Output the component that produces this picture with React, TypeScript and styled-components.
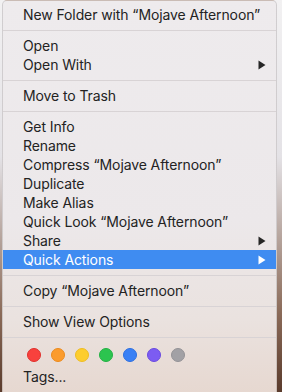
import React from "react";
import styled, { createGlobalStyle } from "styled-components";

const GlobalStyle = createGlobalStyle`
  html, body {
    margin: 0;
    padding: 0;
    width: 282px;
    height: 392px;
    overflow: hidden;
    background: linear-gradient(to bottom, #f2f1f2 0%, #e4e2e6 40%, #8a6a58 80%, #5a3b2c 100%);
  }
  body {
    font-family: Inter, "Noto Sans", "Liberation Sans", sans-serif;
  }
`;

type Entry =
  | { kind: "item"; label: string; submenu?: boolean; active?: boolean }
  | { kind: "sep" };

const entries: Entry[] = [
  { kind: "item", label: "New Folder with \u201cMojave Afternoon\u201d" },
  { kind: "sep" },
  { kind: "item", label: "Open" },
  { kind: "item", label: "Open With", submenu: true },
  { kind: "sep" },
  { kind: "item", label: "Move to Trash" },
  { kind: "sep" },
  { kind: "item", label: "Get Info" },
  { kind: "item", label: "Rename" },
  { kind: "item", label: "Compress \u201cMojave Afternoon\u201d" },
  { kind: "item", label: "Duplicate" },
  { kind: "item", label: "Make Alias" },
  { kind: "item", label: "Quick Look \u201cMojave Afternoon\u201d" },
  { kind: "item", label: "Share", submenu: true },
  { kind: "item", label: "Quick Actions", submenu: true, active: true },
  { kind: "sep" },
  { kind: "item", label: "Copy \u201cMojave Afternoon\u201d" },
  { kind: "sep" },
  { kind: "item", label: "Show View Options" },
  { kind: "sep" },
];

const tagColors = [
  { fill: "#f8413d", ring: "#e0302c" },
  { fill: "#fb9b2c", ring: "#ec8a1c" },
  { fill: "#fdcd2e", ring: "#eebd22" },
  { fill: "#2cc44f", ring: "#22b144" },
  { fill: "#3a80f5", ring: "#2d6fe0" },
  { fill: "#7c5cf2", ring: "#6a4ae0" },
  { fill: "#a2a1a5", ring: "#939296" },
];

export default function App() {
  return (
    <>
      <GlobalStyle />
      <Page>
        <Menu>
          {entries.map((e, i) =>
            e.kind === "sep" ? (
              <Separator key={i} />
            ) : (
              <Item key={i} $active={e.active}>
                <Label>{e.label}</Label>
                {e.submenu && (
                  <Arrow viewBox="0 0 8 10" $active={e.active}>
                    <path d="M0.5 0.5 L7.5 5 L0.5 9.5 Z" />
                  </Arrow>
                )}
              </Item>
            )
          )}
          <TagRow>
            {tagColors.map((c) => (
              <Dot key={c.fill} $fill={c.fill} $ring={c.ring} />
            ))}
          </TagRow>
          <Item>
            <Label>Tags...</Label>
          </Item>
        </Menu>
      </Page>
    </>
  );
}

const Page = styled.div`
  width: 282px;
  height: 392px;
  display: flex;
  padding-left: 2px;
  box-sizing: border-box;
`;

const Menu = styled.div`
  width: 275px;
  height: 400px;
  box-sizing: border-box;
  padding-top: 4px;
  display: flex;
  flex-direction: column;
  border: 1px solid rgba(0, 0, 0, 0.12);
  border-radius: 5px;
  background: linear-gradient(
    to bottom,
    #eeebed 0%,
    #ece8ea 55%,
    #eae2df 80%,
    #e6d7cf 100%
  );
`;

const Item = styled.div<{ $active?: boolean }>`
  height: 19px;
  display: flex;
  align-items: center;
  padding: 0 10px 0 20px;
  background: ${(p) => (p.$active ? "#3f8cf1" : "transparent")};
  color: ${(p) => (p.$active ? "#ffffff" : "#232323")};
`;

const Label = styled.span`
  flex: 1;
  font-size: 14px;
  letter-spacing: -0.1px;
  line-height: 19px;
  white-space: nowrap;
`;

const Arrow = styled.svg<{ $active?: boolean }>`
  width: 8px;
  height: 10px;
  fill: ${(p) => (p.$active ? "#ffffff" : "#262626")};
`;

const Separator = styled.div`
  height: 12px;
  display: flex;
  align-items: center;
  &::before {
    content: "";
    flex: 1;
    height: 1px;
    background: #d8d3d5;
  }
`;

const TagRow = styled.div`
  height: 24px;
  display: flex;
  align-items: center;
  gap: 10px;
  padding-left: 24px;
`;

const Dot = styled.span<{ $fill: string; $ring: string }>`
  width: 14px;
  height: 14px;
  box-sizing: border-box;
  border-radius: 50%;
  background: ${(p) => p.$fill};
  border: 1px solid ${(p) => p.$ring};
`;
